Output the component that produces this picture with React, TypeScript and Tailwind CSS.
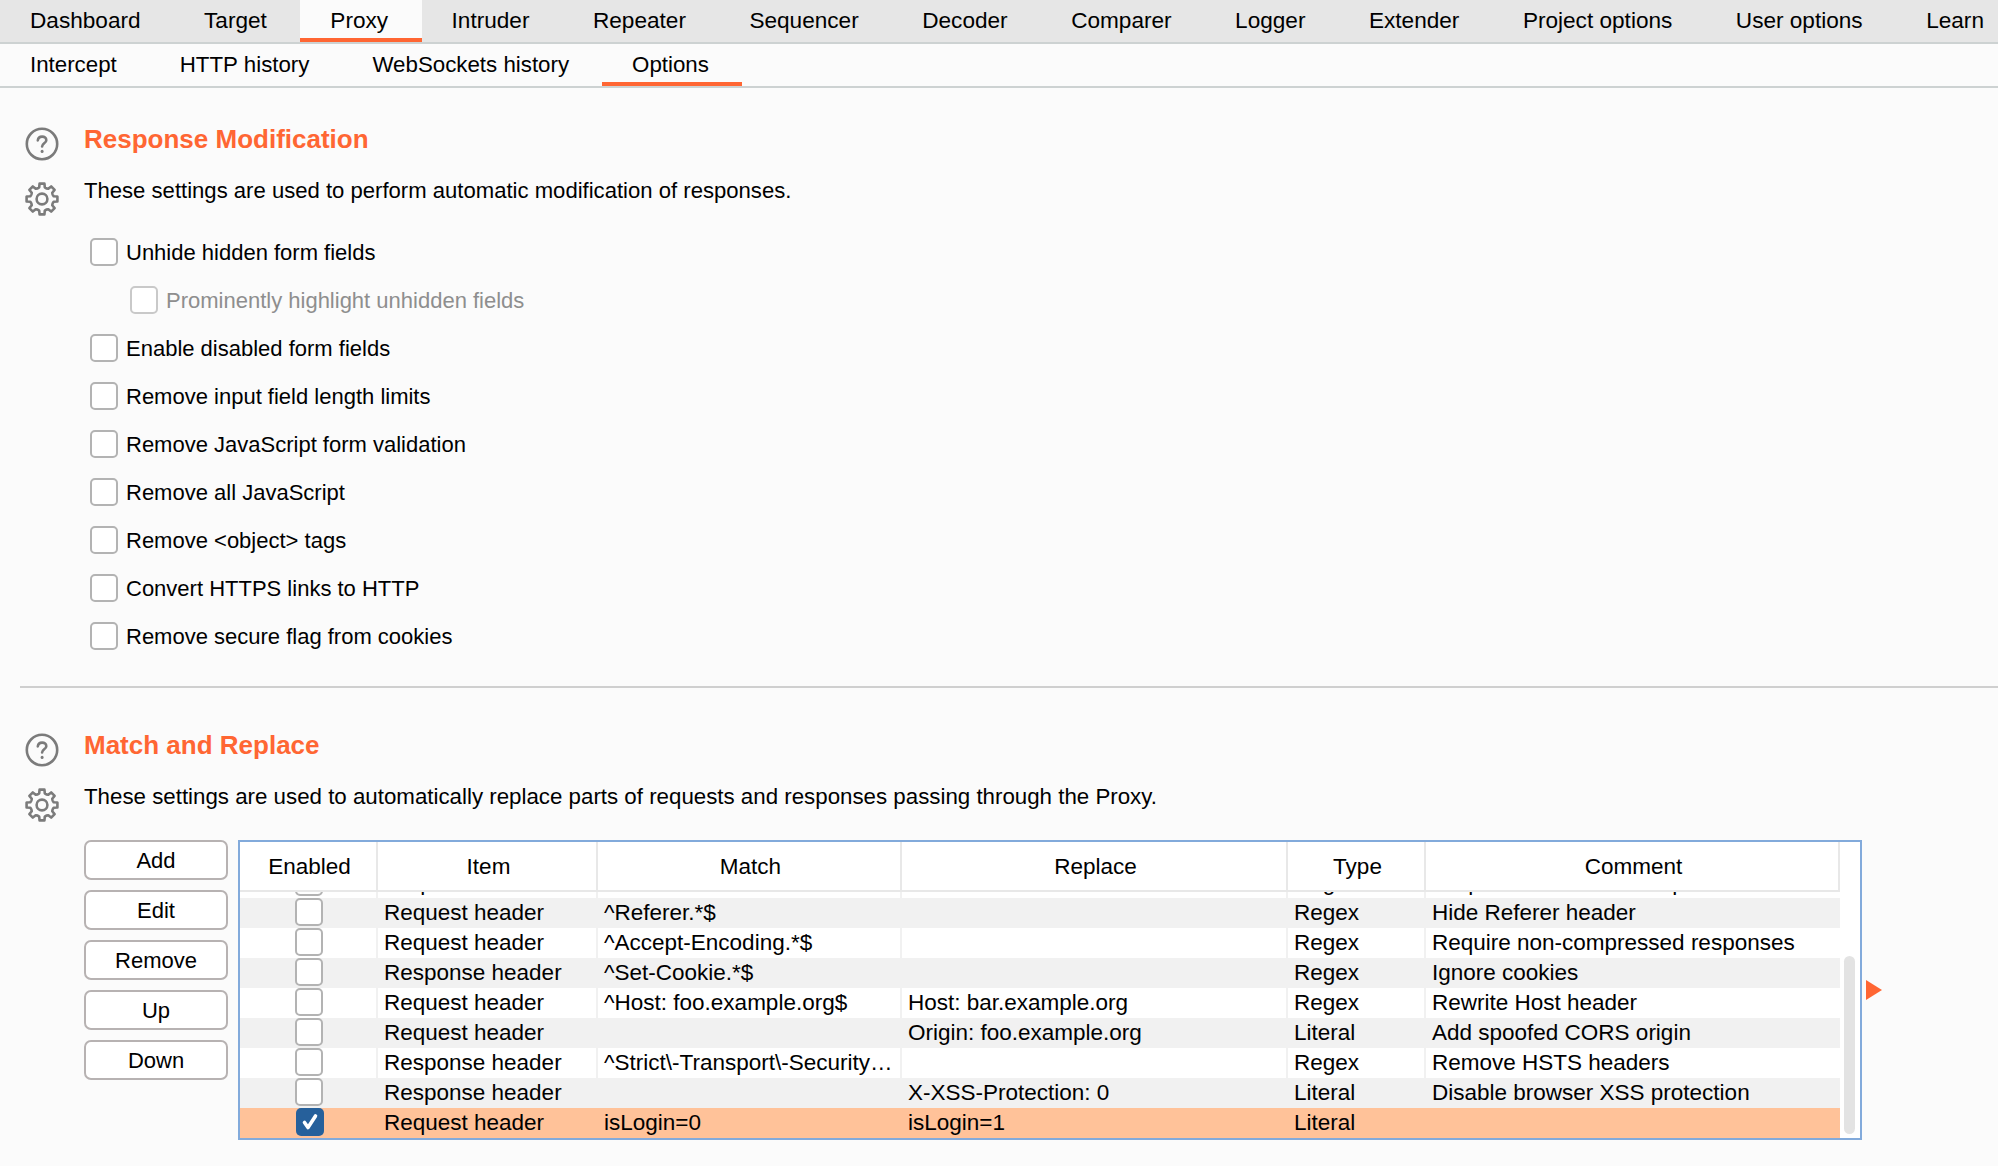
import type { ReactNode } from "react";

const topTabs = [
  "Dashboard",
  "Target",
  "Proxy",
  "Intruder",
  "Repeater",
  "Sequencer",
  "Decoder",
  "Comparer",
  "Logger",
  "Extender",
  "Project options",
  "User options",
  "Learn",
];
const subTabs = ["Intercept", "HTTP history", "WebSockets history", "Options"];

const responseOptions = [
  { label: "Unhide hidden form fields" },
  { label: "Prominently highlight unhidden fields", disabled: true },
  { label: "Enable disabled form fields" },
  { label: "Remove input field length limits" },
  { label: "Remove JavaScript form validation" },
  { label: "Remove all JavaScript" },
  { label: "Remove <object> tags" },
  { label: "Convert HTTPS links to HTTP" },
  { label: "Remove secure flag from cookies" },
];

const rules = [
  ["Request header", "^If-None-Match.*$", "", "Regex", "Require non-cached response"],
  ["Request header", "^Referer.*$", "", "Regex", "Hide Referer header"],
  ["Request header", "^Accept-Encoding.*$", "", "Regex", "Require non-compressed responses"],
  ["Response header", "^Set-Cookie.*$", "", "Regex", "Ignore cookies"],
  ["Request header", "^Host: foo.example.org$", "Host: bar.example.org", "Regex", "Rewrite Host header"],
  ["Request header", "", "Origin: foo.example.org", "Literal", "Add spoofed CORS origin"],
  ["Response header", "^Strict\\-Transport\\-Security…", "", "Regex", "Remove HSTS headers"],
  ["Response header", "", "X-XSS-Protection: 0", "Literal", "Disable browser XSS protection"],
  ["Request header", "isLogin=0", "isLogin=1", "Literal", ""],
];

function gearPath() {
  const points: string[] = [];
  const teeth = 8;
  for (let i = 0; i < teeth; i++) {
    const a = (i / teeth) * Math.PI * 2 - Math.PI / 2;
    const step = (Math.PI * 2) / teeth;
    const at = (r: number, t: number) =>
      `${(17 + r * Math.cos(a + t * step)).toFixed(2)} ${(17 + r * Math.sin(a + t * step)).toFixed(2)}`;
    points.push(at(11.5, -0.5), at(12, -0.3), at(15.6, -0.2), at(15.6, 0.2), at(12, 0.3));
  }
  return `M${points.join("L")}Z`;
}

function GearIcon() {
  return (
    <svg width="34" height="34" viewBox="0 0 34 34" fill="none" stroke="#7b7b7b" strokeWidth="2.6" strokeLinejoin="round">
      <path d={gearPath()} />
      <circle cx="17" cy="17" r="5.4" />
    </svg>
  );
}

function HelpIcon() {
  return (
    <svg width="34" height="34" viewBox="0 0 34 34" fill="none" stroke="#7b7b7b" strokeWidth="2.6" strokeLinecap="round">
      <circle cx="17" cy="17" r="15.2" />
      <path d="M12.8 13.4c.3-2.4 2.1-3.8 4.3-3.8 2.4 0 4.2 1.5 4.2 3.6 0 3-4.2 3.3-4.2 6.3" />
      <path d="M17.1 24.2v.2" strokeWidth="3" />
    </svg>
  );
}

function Tabs({ items, active, className }: { items: string[]; active: string; className: string }) {
  return (
    <div className={`flex ${className}`}>
      {items.map((tab) => (
        <div
          key={tab}
          className={`flex items-center whitespace-nowrap pt-[3px] pl-[30px] ${
            tab === active ? "border-b-4 border-[#ff6633] bg-[#fbfbfb]" : "pb-[4px]"
          }`}
        >
          {tab}
        </div>
      ))}
    </div>
  );
}

function Checkbox({ checked, disabled }: { checked?: boolean; disabled?: boolean }) {
  if (checked) {
    return (
      <span className="flex h-[28px] w-[28px] shrink-0 items-center justify-center rounded-[5px] bg-[#26609b]">
        <svg width="20" height="20" viewBox="0 0 20 20" fill="none" stroke="#fff" strokeWidth="3.6" strokeLinecap="round" strokeLinejoin="round">
          <path d="M4.5 10.5 8 15.5 15.5 4" />
        </svg>
      </span>
    );
  }
  return (
    <span
      className={`block h-[28px] w-[28px] shrink-0 rounded-[5px] border-2 bg-white ${
        disabled ? "border-[#c9c9c9]" : "border-[#b3b3b3]"
      }`}
    />
  );
}

function Section({
  title,
  description,
  descriptionSize,
  children,
}: {
  title: string;
  description: string;
  descriptionSize: string;
  children: ReactNode;
}) {
  return (
    <section className="flex pl-[25px]">
      <div className="flex w-[59px] shrink-0 flex-col gap-[21px] pt-[3px]">
        <HelpIcon />
        <GearIcon />
      </div>
      <div className="flex-1">
        <h2 className="text-[26px] leading-[30px] font-bold text-[#ff6633]">{title}</h2>
        <p className={`mt-[22px] leading-[30px] ${descriptionSize}`}>{description}</p>
        {children}
      </div>
    </section>
  );
}

const columns = "grid grid-cols-[138px_220px_304px_386px_138px_414px]";

function RulesTable() {
  const headers = ["Enabled", "Item", "Match", "Replace", "Type", "Comment"];
  return (
    <div className="flex h-[300px] w-[1624px] border-2 border-[#82aadb] bg-white text-[22.5px]">
      <div className="w-[1600px]">
        <div className={`${columns} h-[50px] border-b-2 border-[#e8e8e8]`}>
          {headers.map((h) => (
            <div key={h} className="flex items-center justify-center border-r-2 border-[#e8e8e8] pl-[3px] pt-[2px]">
              {h}
            </div>
          ))}
        </div>
        <div className="flex h-[246px] flex-col justify-end overflow-hidden">
          {rules.map((rule, i) => {
            const last = i === rules.length - 1;
            const bg = last ? "bg-[#ffc299]" : i % 2 === 1 ? "bg-[#f1f1f1]" : "bg-white";
            return (
              <div key={rule[1] + rule[2]} className={`${columns} h-[30px] shrink-0 ${bg}`}>
                <div className={`flex justify-center pl-[2px] ${last ? "" : "border-r-2 border-[#f1f1f1]"}`}>
                  <Checkbox checked={last} />
                </div>
                {rule.map((cell, c) => (
                  <div
                    key={c}
                    className={`whitespace-nowrap pl-[6px] leading-[30px] ${
                      last || c === 4 ? "" : "border-r-2 border-[#f1f1f1]"
                    }`}
                  >
                    {cell}
                  </div>
                ))}
              </div>
            );
          })}
        </div>
      </div>
      <div className="flex-1 pl-[4px] pt-[114px]">
        <div className="h-[178px] w-[11px] rounded-full bg-[#e3e3e3]" />
      </div>
    </div>
  );
}

export default function App() {
  return (
    <div className="h-[1166px] overflow-hidden bg-[#fbfbfb] text-[22px] text-black [font-family:'Liberation_Sans',Arial,sans-serif]">
      <Tabs
        items={topTabs}
        active="Proxy"
        className="h-[44px] border-b-2 border-[#cdd2d2] bg-[#e6e6e6] text-[22.6px] [&>div]:pr-[33.5px]"
      />
      <Tabs
        items={subTabs}
        active="Options"
        className="h-[44px] border-b-2 border-[#cdd2d2] text-[22.3px] [&>div]:pr-[33px]"
      />

      <div className="pt-[36px]">
        <Section
          title="Response Modification"
          description="These settings are used to perform automatic modification of responses."
          descriptionSize="text-[22.1px]"
        >
          <div className="mt-[22px] pl-[6px]">
            {responseOptions.map((o) => (
              <label
                key={o.label}
                className={`flex h-[48px] items-center gap-[8px] ${o.disabled ? "pl-[40px] text-[#8e8e8e]" : ""}`}
              >
                <Checkbox disabled={o.disabled} />
                {o.label}
              </label>
            ))}
          </div>
        </Section>

        <div className="mb-[42px] ml-[20px] mt-[26px] h-[2px] bg-[#cfcfcf]" />

        <Section
          title="Match and Replace"
          description="These settings are used to automatically replace parts of requests and responses passing through the Proxy."
          descriptionSize="text-[22.3px]"
        >
          <div className="mt-[28px] flex items-start gap-[10px]">
            <div className="flex w-[144px] flex-col gap-[10px]">
              {["Add", "Edit", "Remove", "Up", "Down"].map((b) => (
                <button
                  key={b}
                  className="h-[40px] rounded-[7px] border-2 border-[#b7b2b2] bg-white"
                >
                  {b}
                </button>
              ))}
            </div>
            <RulesTable />
            <svg className="-ml-[6px] mt-[140px]" width="16" height="20" viewBox="0 0 16 20">
              <path d="M0 0 16 10 0 20Z" fill="#ff6633" />
            </svg>
          </div>
        </Section>
      </div>
    </div>
  );
}
